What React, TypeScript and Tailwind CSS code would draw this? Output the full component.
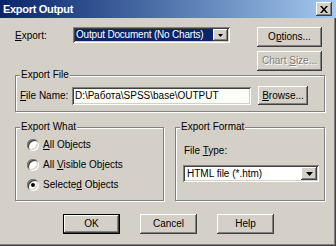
import React from 'react'

const raised = 'shadow-[inset_-1px_-1px_0_#404040,inset_1px_1px_0_#fff,inset_-2px_-2px_0_#808080]'
const sunken = 'shadow-[inset_1px_1px_0_#808080,inset_-1px_-1px_0_#fff,inset_2px_2px_0_#404040,inset_-2px_-2px_0_#d4d0c8]'

function Btn({ className = '', children, disabled, isDefault }: { className?: string; children: React.ReactNode; disabled?: boolean; isDefault?: boolean }) {
  if (isDefault) {
    return (
      <div className={`border border-black bg-[#d4d0c8] ${className}`}>
        <div className={`h-full w-full flex items-center justify-center ${raised}`}>{children}</div>
      </div>
    )
  }
  return (
    <div
      className={`bg-[#d4d0c8] flex items-center justify-center ${raised} ${className} ${
        disabled ? 'text-[#808080] [text-shadow:1px_1px_0_#fff]' : ''
      }`}
    >
      {children}
    </div>
  )
}

function Group({ title, className = '', children }: { title: string; className?: string; children: React.ReactNode }) {
  return (
    <div className={`relative border border-[#808080] shadow-[inset_1px_1px_0_#fff,1px_1px_0_#fff] ${className}`}>
      <span className="absolute left-[4px] top-[-8px] bg-[#d4d0c8] px-[1px] leading-[14px]">{title}</span>
      {children}
    </div>
  )
}

function Arrow() {
  return (
    <svg width="7" height="4" viewBox="0 0 7 4">
      <path d="M0 0h7L3.5 4z" fill="#000" />
    </svg>
  )
}

function Radio({ checked, children }: { checked?: boolean; children: React.ReactNode }) {
  return (
    <div className="flex items-center h-[20px]">
      <div className={`w-[12px] h-[12px] rounded-full bg-white flex items-center justify-center ${sunken}`}>
        {checked && <div className="w-[4px] h-[4px] rounded-full bg-black" />}
      </div>
      <span className="ml-[4px]">{children}</span>
    </div>
  )
}

export default function App() {
  return (
    <div
      className="w-[336px] h-[246px] bg-[#d4d0c8] flex flex-col text-[10px] leading-[12px] text-black whitespace-nowrap shadow-[inset_-1px_-1px_0_#404040,inset_-2px_-2px_0_#808080] overflow-hidden"
      style={{ fontFamily: '"Liberation Sans", Arial, sans-serif' }}
    >
      {/* title bar */}
      <div className="h-[18px] flex items-center bg-linear-to-r from-[#0a246a] to-[#a6caf0] pl-[3px] pr-[4px]">
        <span className="font-bold text-[11px] text-white tracking-[-0.3px]">Export Output</span>
        <div className={`ml-auto w-[16px] h-[14px] flex items-center justify-center ${raised} bg-[#d4d0c8]`}>
          <svg width="8" height="7" viewBox="0 0 8 7">
            <path d="M0 0h2l2 2.5L6 0h2L5 3.5 8 7H6L4 4.5 2 7H0l3-3.5z" fill="#000" />
          </svg>
        </div>
      </div>

      {/* export row */}
      <div className="flex mt-[9px] pl-[15px]">
        <div className="flex items-start">
          <span className="w-[58px] mt-[3px]">
            <span className="underline">E</span>xport:
          </span>
          <div className={`w-[157px] h-[16px] bg-white flex p-[2px] ${sunken}`}>
            <div className="flex-1 bg-[#0a246a] text-white pl-[1px] leading-[12px] tracking-[-0.2px] overflow-hidden">Output Document (No Charts)</div>
            <div className={`w-[15px] bg-[#d4d0c8] flex items-center justify-center ${raised}`}>
              <svg width="5" height="3" viewBox="0 0 5 3">
                <path d="M0 0h5L2.5 3z" fill="#000" />
              </svg>
            </div>
          </div>
        </div>
        <div className="flex flex-col gap-[4px] ml-[27px]">
          <Btn className="w-[65px] h-[20px]">
            <span>
              O<span className="underline">p</span>tions...
            </span>
          </Btn>
          <Btn className="w-[65px] h-[20px]" disabled>
            <span>
              Chart <span className="underline">S</span>ize...
            </span>
          </Btn>
        </div>
      </div>

      {/* export file */}
      <Group title="Export File" className="ml-[15px] mt-[4px] w-[310px] h-[37px]">
        <div className="flex items-center mt-[10px] pl-[4px]">
          <span className="w-[52px]">
            <span className="underline">F</span>ile Name:
          </span>
          <div className={`w-[179px] h-[18px] bg-[#fbfff7] pl-[3px] flex items-center ${sunken}`}>D:\Работа\SPSS\base\OUTPUT</div>
          <Btn className="w-[50px] h-[19px] ml-[7px]">
            <span>
              <span className="underline">B</span>rowse...
            </span>
          </Btn>
        </div>
      </Group>

      {/* lower groups */}
      <div className="flex gap-[11px] ml-[15px] mt-[15px]">
        <Group title="Export What" className="w-[149px] h-[74px]">
          <div className="flex flex-col pl-[11px] mt-[7px]">
            <Radio>
              <span className="underline">A</span>ll Objects
            </Radio>
            <Radio>
              All <span className="underline">V</span>isible Objects
            </Radio>
            <Radio checked>
              Selecte<span className="underline">d</span> Objects
            </Radio>
          </div>
        </Group>
        <Group title="Export Format" className="w-[150px] h-[74px]">
          <div className="pl-[8px] mt-[17px]">
            File <span className="underline">T</span>ype:
          </div>
          <div className={`ml-[7px] mt-[8px] w-[136px] h-[17px] bg-white flex p-[2px] ${sunken}`}>
            <div className="flex-1 pl-[2px] leading-[13px] overflow-hidden">HTML file (*.htm)</div>
            <div className={`w-[16px] bg-[#d4d0c8] flex items-center justify-center ${raised}`}>
              <Arrow />
            </div>
          </div>
        </Group>
      </div>

      {/* buttons */}
      <div className="flex gap-[20px] ml-[63px] mt-[13px]">
        <Btn className="w-[57px] h-[20px]" isDefault>
          OK
        </Btn>
        <Btn className="w-[57px] h-[20px]">Cancel</Btn>
        <Btn className="w-[57px] h-[20px]">Help</Btn>
      </div>
    </div>
  )
}
